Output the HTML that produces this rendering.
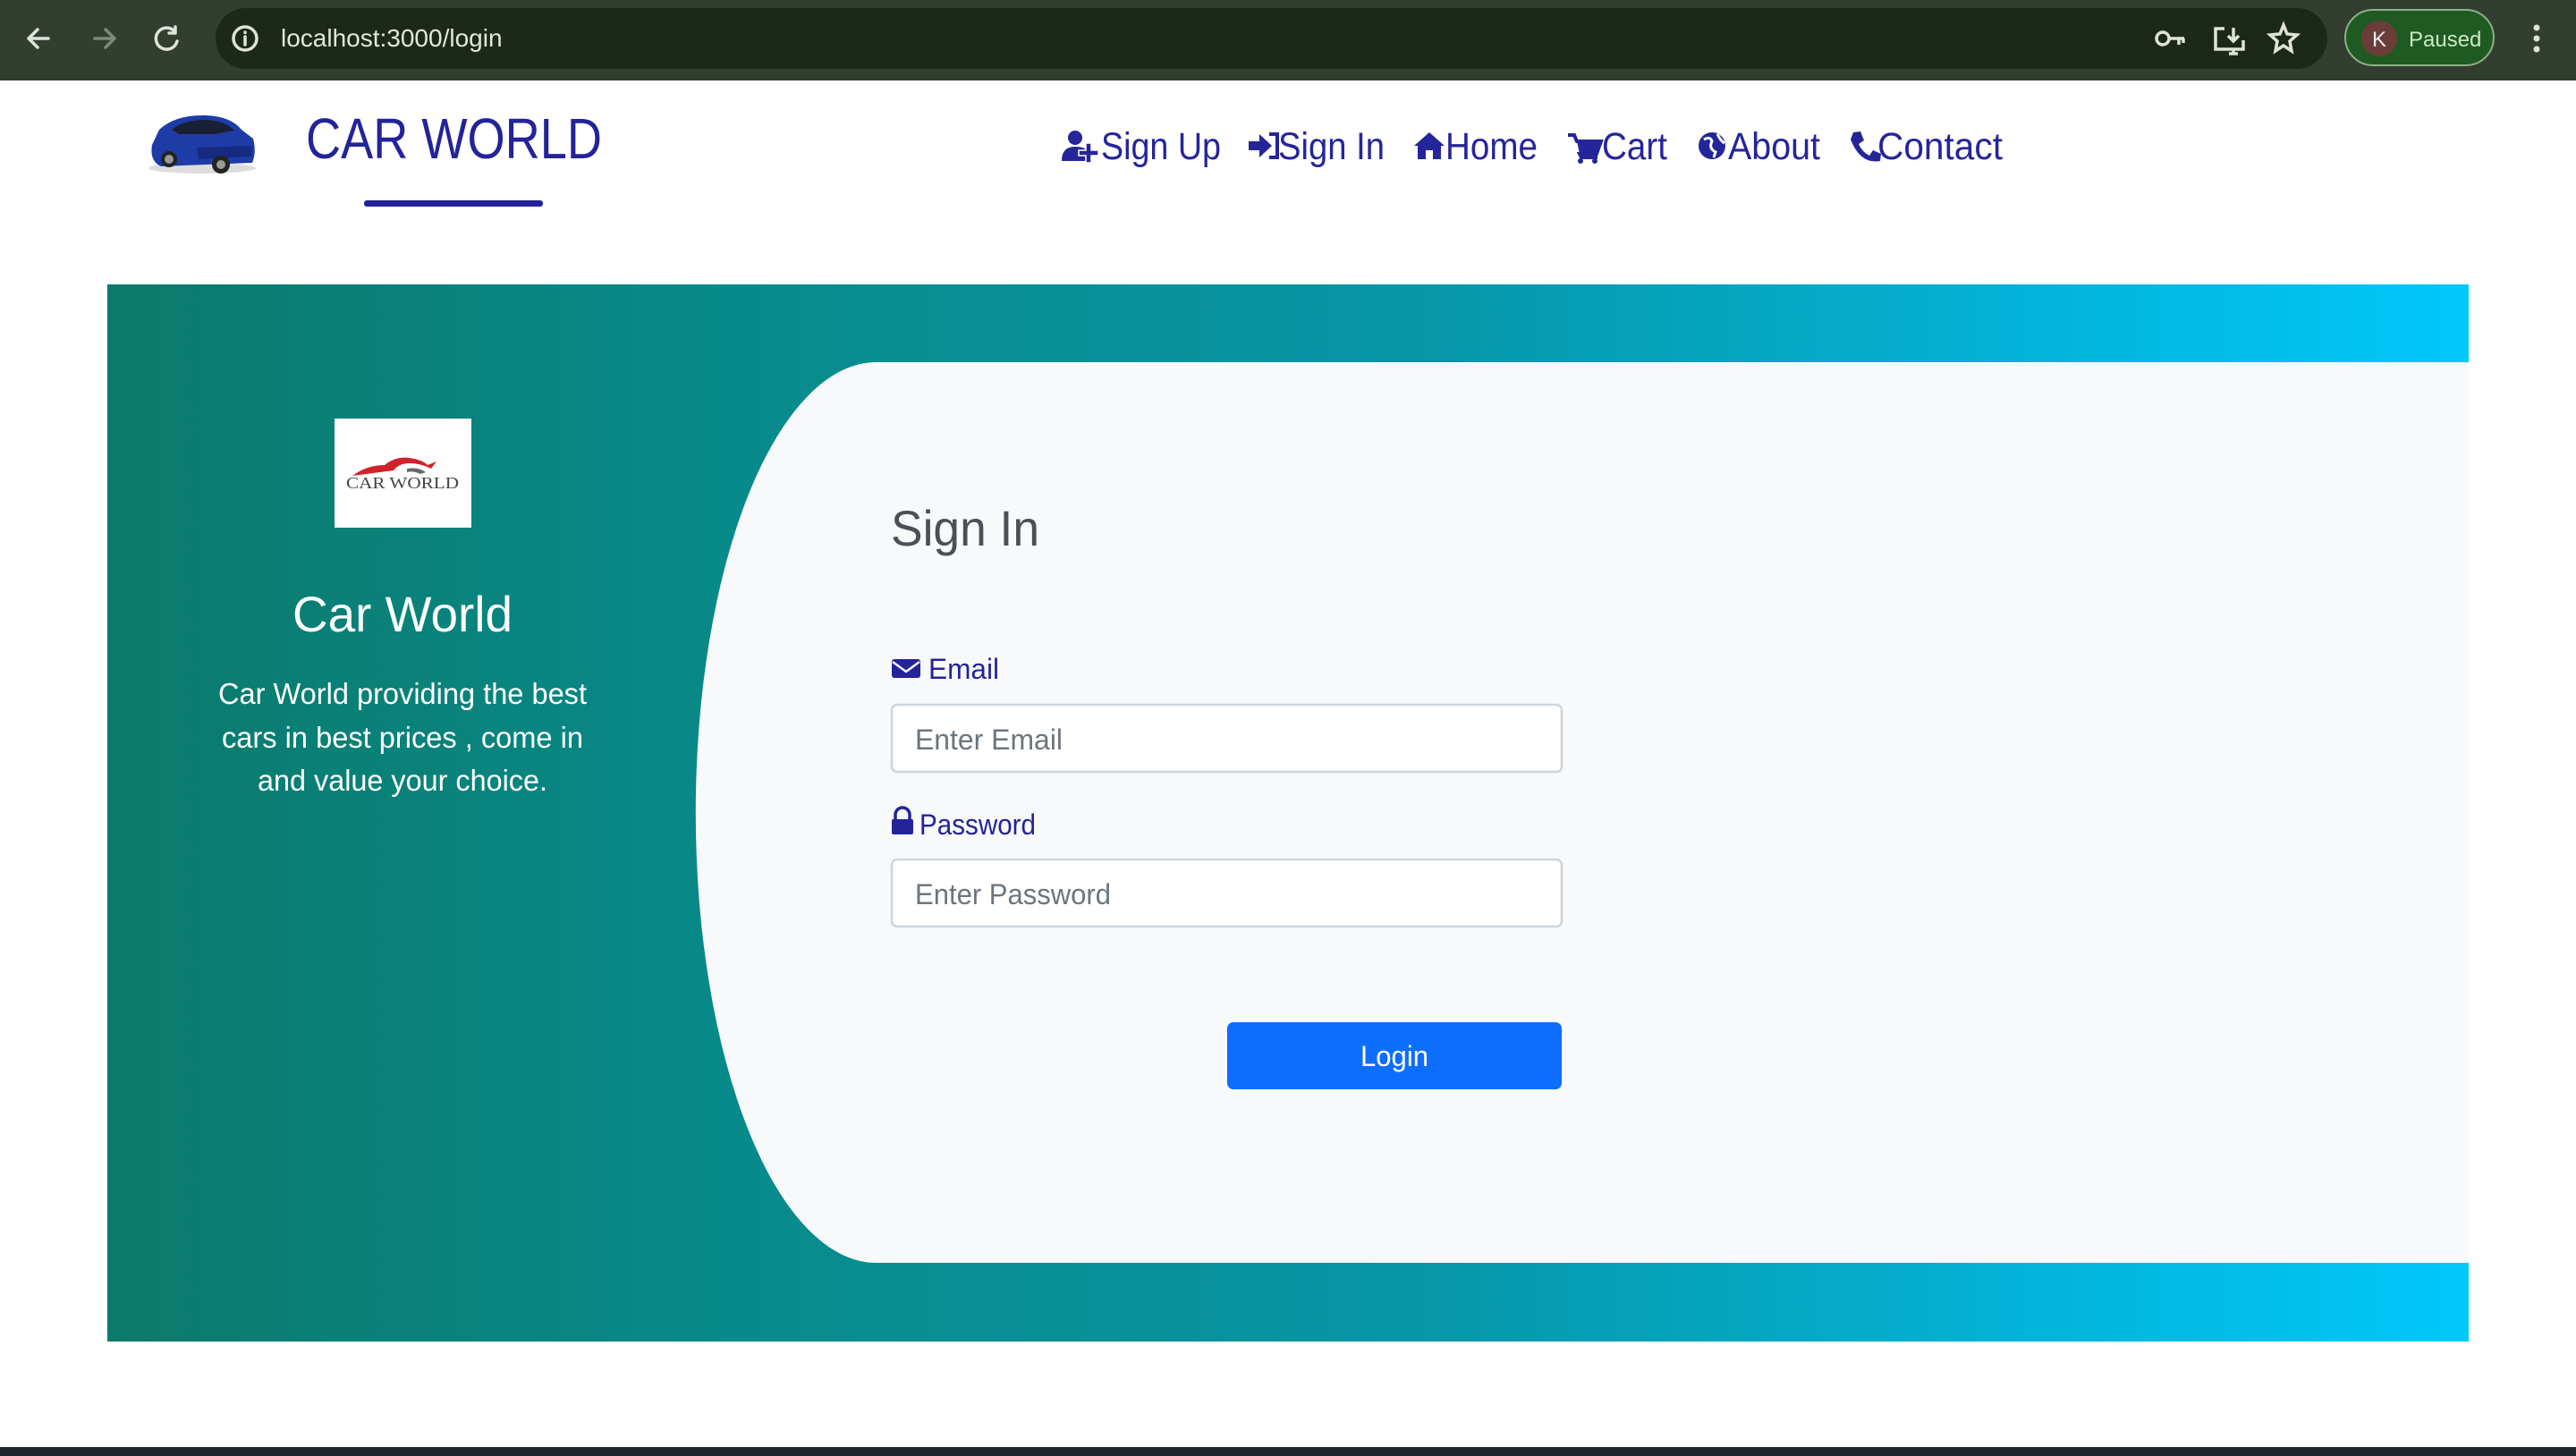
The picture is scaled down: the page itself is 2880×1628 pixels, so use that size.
<!DOCTYPE html>
<html><head><meta charset="utf-8">
<style>
html,body{margin:0;padding:0;width:2880px;height:1628px;overflow:hidden;background:#fff;font-family:"Liberation Sans",sans-serif;}
.abs{position:absolute;}
</style></head>
<body>
<!-- browser chrome -->
<div class="abs" style="left:0;top:0;width:2880px;height:90px;background:#323e2f;"></div>
<div class="abs" style="left:241px;top:9px;width:2361px;height:68px;border-radius:34px;background:#1c2818;"></div>
<div class="abs" style="left:2621px;top:10px;width:168px;height:64px;border-radius:34px;background:#1f5a23;border:2px solid #8fae88;box-sizing:border-box;"></div>
<div class="abs" style="left:0;top:1618px;width:2880px;height:10px;background:#1f2830;"></div>

<svg class="abs" style="left:0;top:0" width="2880" height="1628" xmlns="http://www.w3.org/2000/svg">
 <!-- chrome icons -->
 <g stroke="#dfe3da" stroke-width="3.5" fill="none" stroke-linecap="round" stroke-linejoin="round">
  <path d="M54 43H32M42 33L32 43L42 53"/>
  <path d="M106 43H128M118 33L128 43L118 53" stroke="#7d8a78"/>
  <path d="M196 36A12 12 0 1 0 198 46M196 30V37H189"/>
  <circle cx="274" cy="43" r="13"/>
  <path d="M274 41V50M274 36V36.5"/>
 </g>
 <text x="314" y="52" font-size="28" fill="#e3e6df" font-family="Liberation Sans">localhost:3000/login</text>
 <g stroke="#dfe3da" stroke-width="3.5" fill="none">
  <circle cx="2418" cy="43" r="7"/><path d="M2425 43H2442M2436 43V50M2441 43V48"/>
  <path d="M2487 32H2477V55H2508V45M2492 60H2502M2497 55V60M2497 31V46M2491 40L2497 46L2503 40"/>
  <path d="M2553 28L2557 38L2568 39L2560 46L2562 57L2553 51L2544 57L2546 46L2538 39L2549 38Z"/>
 </g>
 <circle cx="2660" cy="43" r="20" fill="#6b3d38"/>
 <text x="2660" y="52" font-size="24" fill="#eee" text-anchor="middle" font-family="Liberation Sans">K</text>
 <text x="2693" y="52" font-size="24" fill="#cbe8c2" font-family="Liberation Sans">Paused</text>
 <g fill="#dfe3da"><circle cx="2836" cy="31" r="3.5"/><circle cx="2836" cy="43" r="3.5"/><circle cx="2836" cy="55" r="3.5"/></g>

 <!-- car -->
 <g>
  <ellipse cx="226" cy="188" rx="60" ry="6" fill="#ddd"/>
  <path d="M170 162 L178 145 Q196 128 230 129 Q258 130 270 145 L283 155 Q287 170 282 182 L180 186 Q167 180 170 162Z" fill="#1e3ca8"/>
  <path d="M192 145 Q205 134 230 134 Q252 135 262 146 L240 150 L200 150Z" fill="#1a1f33"/>
  <path d="M220 165 L282 163 L281 175 L222 178Z" fill="#162a80"/>
  <circle cx="189" cy="178" r="9" fill="#222"/><circle cx="189" cy="178" r="5" fill="#999"/>
  <circle cx="247" cy="184" r="10" fill="#222"/><circle cx="247" cy="184" r="5" fill="#999"/>
 </g>
 <text x="342" y="177" font-size="64" fill="#23239a" textLength="331" lengthAdjust="spacingAndGlyphs" font-family="Liberation Sans">CAR WORLD</text>
 <rect x="407" y="224" width="200" height="7" rx="3" fill="#23239a"/>

 <!-- nav -->
 <g fill="#25259a" font-family="Liberation Sans" font-size="43">
  <text x="1231" y="178" textLength="134" lengthAdjust="spacingAndGlyphs">Sign Up</text>
  <text x="1429" y="178" textLength="119" lengthAdjust="spacingAndGlyphs">Sign In</text>
  <text x="1616" y="178" textLength="103" lengthAdjust="spacingAndGlyphs">Home</text>
  <text x="1791" y="178" textLength="73" lengthAdjust="spacingAndGlyphs">Cart</text>
  <text x="1932" y="178" textLength="103" lengthAdjust="spacingAndGlyphs">About</text>
  <text x="2099" y="178" textLength="140" lengthAdjust="spacingAndGlyphs">Contact</text>
  <!-- icons -->
  <circle cx="1202" cy="154" r="8"/>
  <path d="M1187 180 Q1187 164 1202 164 Q1214 164 1216 170 L1214 180Z"/>
  <path d="M1214 160H1220V168H1228V174H1220V182H1214V174H1206V168H1214Z" stroke="#fff" stroke-width="1.5"/>
  <path d="M1396 158H1408V150L1422 163L1408 176V168H1396Z"/>
  <path d="M1419 150H1428V176H1419" fill="none" stroke="#25259a" stroke-width="4"/>
  <path d="M1581 163 L1598 148 L1615 163 L1611 163 L1611 178 L1602 178 L1602 168 L1594 168 L1594 178 L1585 178 L1585 163Z"/>
  <path d="M1753 151 H1760 L1763 158 H1790 L1785 172 H1766 L1768 176 H1786" fill="none" stroke="#25259a" stroke-width="4"/>
  <path d="M1763 158 H1790 L1785 172 H1766Z"/>
  <circle cx="1767" cy="180" r="3"/><circle cx="1783" cy="180" r="3"/>
  <circle cx="1914" cy="163" r="15"/>
  <path d="M1905 156 Q1912 152 1914 158 Q1910 166 1918 170 L1916 176 M1920 150 Q1924 158 1928 160" fill="none" stroke="#fff" stroke-width="3"/>
  <path d="M2072 148 L2080 147 L2084 157 L2078 161 Q2082 170 2090 174 L2094 168 L2103 172 L2102 180 Q2080 184 2069 156Z"/>
 </g>

 <!-- card -->
 <defs>
  <linearGradient id="g" x1="0" x2="1" y1="0" y2="0">
   <stop offset="0" stop-color="#0b7a6b"/>
   <stop offset="0.3" stop-color="#088c8e"/>
   <stop offset="0.55" stop-color="#0796a6"/>
   <stop offset="1" stop-color="#00c8fb"/>
  </linearGradient>
 </defs>
 <rect x="120" y="318" width="2640" height="1182" fill="url(#g)"/>
 <path d="M980 405 H2760 V1412 H980 A202 503 0 0 1 980 405Z" fill="#f8f9fa"/>

 <!-- logo box -->
 <rect x="374" y="468" width="153" height="122" fill="#fff"/>
 <path d="M394 532 Q410 520 430 520 Q442 510 458 512 Q472 514 478 520 L488 516 L482 524 Q470 518 458 518 Q446 518 440 526 Z" fill="#d0222a"/>
 <path d="M455 524 Q468 522 476 528 L470 530 Q462 526 455 528Z" fill="#666"/>
 <text x="450" y="546" font-size="18" fill="#444" text-anchor="middle" font-family="Liberation Serif" textLength="126" lengthAdjust="spacingAndGlyphs">CAR WORLD</text>

 <g fill="#fff" font-family="Liberation Sans" text-anchor="middle">
  <text x="450" y="706" font-size="56" textLength="246" lengthAdjust="spacingAndGlyphs">Car World</text>
  <text x="450" y="787" font-size="33" textLength="412" lengthAdjust="spacingAndGlyphs">Car World providing the best</text>
  <text x="450" y="836" font-size="33" textLength="404" lengthAdjust="spacingAndGlyphs">cars in best prices , come in</text>
  <text x="450" y="884" font-size="33" textLength="324" lengthAdjust="spacingAndGlyphs">and value your choice.</text>
 </g>

 <!-- form -->
 <text x="996" y="610" font-size="56" fill="#495057" font-family="Liberation Sans" textLength="166" lengthAdjust="spacingAndGlyphs">Sign In</text>
 <rect x="997" y="737" width="32" height="21" rx="3" fill="#23239a"/>
 <path d="M998 740 L1013 751 L1028 740" fill="none" stroke="#f8f9fa" stroke-width="2.5"/>
 <text x="1038" y="759" font-size="32" fill="#23239a" font-family="Liberation Sans" textLength="79" lengthAdjust="spacingAndGlyphs">Email</text>
 <rect x="997" y="788" width="749" height="75" rx="6" fill="#fff" stroke="#ced4da" stroke-width="2.5"/>
 <text x="1023" y="838" font-size="32" fill="#6c757d" font-family="Liberation Sans" textLength="165" lengthAdjust="spacingAndGlyphs">Enter Email</text>

 <path d="M1001 917 V911 A8 8 0 0 1 1017 911 V917" fill="none" stroke="#23239a" stroke-width="3.5"/>
 <rect x="997" y="916" width="24" height="17" rx="2" fill="#23239a"/>
 <text x="1028" y="933" font-size="32" fill="#23239a" font-family="Liberation Sans" textLength="130" lengthAdjust="spacingAndGlyphs">Password</text>
 <rect x="997" y="961" width="749" height="75" rx="6" fill="#fff" stroke="#ced4da" stroke-width="2.5"/>
 <text x="1023" y="1011" font-size="32" fill="#6c757d" font-family="Liberation Sans" textLength="219" lengthAdjust="spacingAndGlyphs">Enter Password</text>

 <rect x="1372" y="1143" width="374" height="75" rx="7" fill="#0d6efd"/>
 <text x="1559" y="1192" font-size="32" fill="#fff" text-anchor="middle" font-family="Liberation Sans" textLength="76" lengthAdjust="spacingAndGlyphs">Login</text>
</svg>
</body></html>
